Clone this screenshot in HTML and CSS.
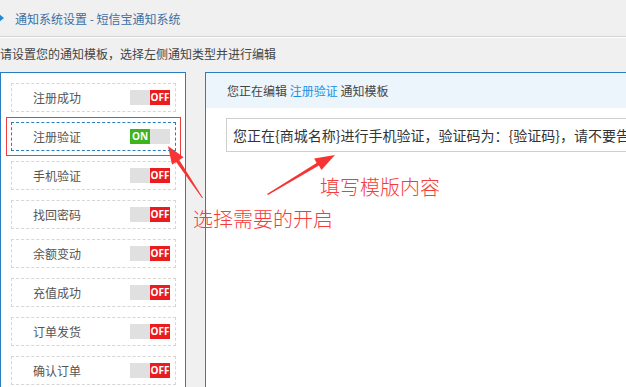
FILE: index.html
```html
<!DOCTYPE html>
<html lang="zh-CN">
<head>
    <meta charset="UTF-8">
    <meta name="viewport" content="width=device-width, initial-scale=1.0">
    <title>通知系统设置</title>
    <link rel="stylesheet" href="styles.css">
</head>
<body>

    <!-- Page title -->
    <div class="top-bar">
        <span class="top-icon"></span>
        <span class="top-title">通知系统设置 - 短信宝通知系统</span>
    </div>

    <p class="tip">请设置您的通知模板，选择左侧通知类型并进行编辑</p>

    <div class="main">
        <!-- Notice types -->
        <div class="type-list">
            <div class="type-item"><span class="type-name">注册成功</span><span class="switch off"><b>OFF</b></span></div>
            <div class="type-item active"><span class="type-name">注册验证</span><span class="switch on"><b>ON</b></span></div>
            <div class="type-item"><span class="type-name">手机验证</span><span class="switch off"><b>OFF</b></span></div>
            <div class="type-item"><span class="type-name">找回密码</span><span class="switch off"><b>OFF</b></span></div>
            <div class="type-item"><span class="type-name">余额变动</span><span class="switch off"><b>OFF</b></span></div>
            <div class="type-item"><span class="type-name">充值成功</span><span class="switch off"><b>OFF</b></span></div>
            <div class="type-item"><span class="type-name">订单发货</span><span class="switch off"><b>OFF</b></span></div>
            <div class="type-item"><span class="type-name">确认订单</span><span class="switch off"><b>OFF</b></span></div>
        </div>

        <!-- Template editor -->
        <div class="editor">
            <div class="editor-head">您正在编辑 <span class="current">注册验证</span> 通知模板</div>
            <div class="editor-body">
                <div class="template-box">您正在{商城名称}进行手机验证，验证码为：{验证码}，请不要告诉任何人。</div>
            </div>
        </div>
    </div>

    <!-- Screenshot notes -->
    <svg class="note-arrows" width="626" height="387" viewBox="0 0 626 387">
        <polygon points="203,198 179.3,159.9 183.6,157.2 168,146 172,164.8 176.1,162.1 202,198" />
        <polygon points="267,194 316.6,162.9 314.2,158.6 335,155 321.4,169.9 318.9,165.6 268,195" />
    </svg>
    <div class="note note-fill">填写模版内容</div>
    <div class="note note-pick">选择需要的开启</div>

</body>
</html>
```

FILE: styles.css
```css
body {
    margin: 0;
    background: #f0f0f0;
    font-family: "Noto Sans CJK SC", "Noto Sans", sans-serif;
    font-size: 12px;
    color: #444;
    overflow: hidden;
    position: relative;
    height: 387px;
}

/* Title bar */
.top-bar {
    height: 36px;
    display: flex;
    align-items: center;
    border-bottom: 1px solid #d3d3d3;
    box-shadow: 0 1px 0 #fff;
}

.top-icon {
    width: 0;
    height: 0;
    border-top: 4px solid transparent;
    border-bottom: 4px solid transparent;
    border-left: 5px solid #1d8ad8;
    margin-left: -1px;
}

.top-title {
    margin-left: 11px;
    color: #3c6fa3;
}

.tip {
    margin: 7px 0 8px;
    line-height: 20px;
    color: #444;
}

/* Main area */
.main {
    display: flex;
    gap: 19px;
    align-items: flex-start;
}

.type-list {
    flex: none;
    width: 186px;
    height: 330px;
    box-sizing: border-box;
    padding: 10px;
    background: #fff;
    border: 1px solid #2a7dbf;
    display: flex;
    flex-direction: column;
    gap: 10px;
}

.type-item {
    width: 165px;
    height: 29px;
    box-sizing: border-box;
    border: 1px dashed #d6d6d6;
    display: flex;
    align-items: center;
    justify-content: space-between;
    padding: 0 5px 0 21px;
    color: #555;
    flex: none;
}

.type-item.active {
    border-color: #2a7dbf;
    outline: 1px solid #f23b3b;
    outline-offset: 4px;
}

.switch {
    width: 40px;
    height: 15px;
    background: #e0e0e0;
    display: flex;
}

.switch b {
    width: 20px;
    height: 15px;
    line-height: 15px;
    text-align: center;
    color: #fff;
    font-family: "Open Sans", "Liberation Sans", sans-serif;
    font-size: 10px;
    font-weight: bold;
}

.switch.off {
    justify-content: flex-end;
}

.switch.off b {
    background: #ea1c1f;
}

.switch.on b {
    background: #3cb41b;
}

/* Editor */
.editor {
    flex: none;
    width: 480px;
    height: 330px;
    background: #fff;
    border: 1px solid #2a7dbf;
}

.editor-head {
    height: 35px;
    line-height: 35px;
    padding-left: 21px;
    background: #edf5fc;
    color: #444;
}

.current {
    color: #1e8fe0;
}

.editor-body {
    padding: 10px 0 0 20px;
}

.template-box {
    height: 34px;
    line-height: 32px;
    box-sizing: border-box;
    border: 1px solid #cfcfcf;
    padding-left: 6px;
    font-size: 14px;
    color: #333;
    white-space: nowrap;
    overflow: hidden;
}

/* Notes over the screenshot */
.note-arrows {
    position: absolute;
    left: 0;
    top: 0;
    fill: #f63434;
}

.note {
    position: absolute;
    font-size: 20px;
    font-weight: 300;
    line-height: 24px;
    color: #f63b3b;
    white-space: nowrap;
}

.note-fill {
    left: 320px;
    top: 175px;
}

.note-pick {
    left: 193px;
    top: 207px;
}
```
